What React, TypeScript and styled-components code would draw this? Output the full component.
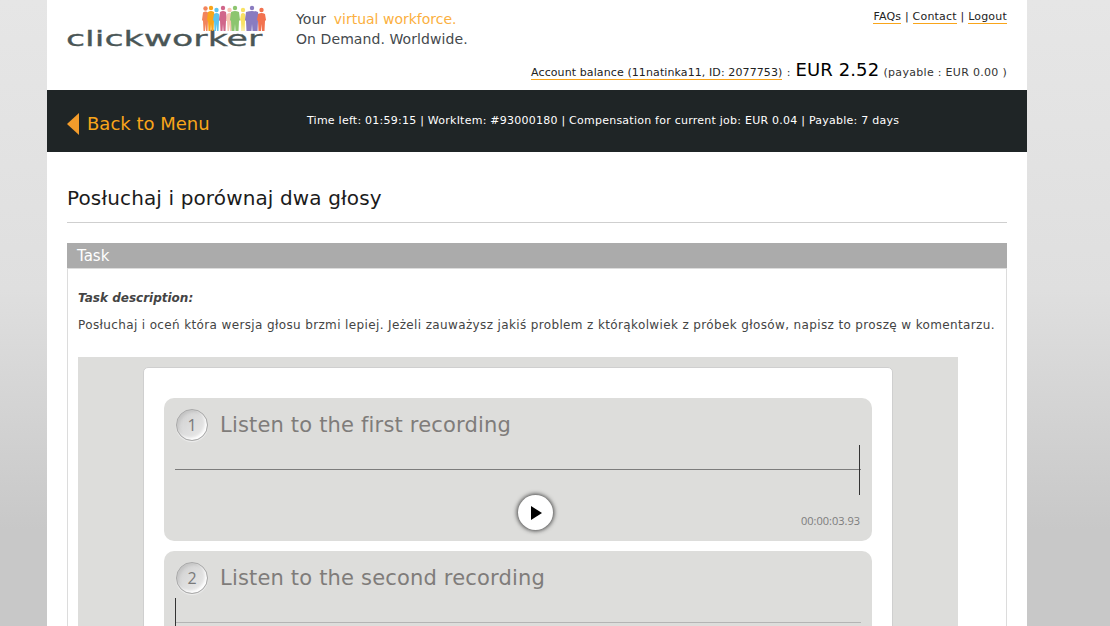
import styled, { createGlobalStyle } from "styled-components";

const GlobalStyle = createGlobalStyle`
  html, body {
    margin: 0;
    height: 100%;
    overflow: hidden;
  }
  body {
    background: linear-gradient(to bottom, #e6e6e6 0, #dfdfdf 290px, #c8c8c8 530px, #c8c8c8 626px);
    font-family: "DejaVu Sans", Verdana, sans-serif;
  }
`;

const Page = styled.div`
  width: 980px;
  height: 626px;
  margin-left: 47px;
  background: #fff;
  overflow: hidden;
`;

const Header = styled.header`
  height: 90px;
  box-sizing: border-box;
  padding: 0 20px;
  display: flex;
  position: relative;
`;

const Logo = styled.div`
  position: relative;
  width: 229px;
  height: 90px;
  flex: none;
`;

const LogoWord = styled.span`
  position: absolute;
  left: -1px;
  top: 21px;
  font-family: "DejaVu Sans", sans-serif;
  font-size: 22px;
  line-height: 36px;
  color: #4a5656;
  -webkit-text-stroke: 0.3px #4a5656;
  transform: scaleX(1.58);
  transform-origin: left;
`;

const LogoPeople = styled.svg`
  position: absolute;
  left: 135px;
  top: 5px;
`;

const Slogan = styled.div`
  padding-top: 9px;
  font-size: 14px;
  line-height: 20px;
  letter-spacing: 0.08px;
  color: #44494d;
`;

const Accent = styled.span`
  margin-left: 3px;
  letter-spacing: 0px;
  color: #fbb040;
`;

const TopLinks = styled.div`
  position: absolute;
  right: 20px;
  top: 10px;
  font-size: 11px;
  line-height: 13px;
  letter-spacing: 0.2px;
  color: #222;
`;

const HeaderLink = styled.a`
  color: #222;
  border-bottom: 1px solid #f9a51a;
`;

const Balance = styled.div`
  position: absolute;
  right: 20px;
  top: 60px;
  font-size: 11px;
  line-height: 20px;
  letter-spacing: 0.8px;
  color: #333;
  white-space: nowrap;
`;

const BalanceLink = styled(HeaderLink)`
  letter-spacing: 0.1px;
`;

const BalanceValue = styled.span`
  font-size: 18px;
  letter-spacing: 0.1px;
  color: #000;
`;

const Payable = styled.span`
  letter-spacing: 0.3px;
`;

const NavBar = styled.nav`
  height: 62px;
  background: #1f2526;
  display: flex;
  align-items: center;
  padding-left: 20px;
`;

const BackLink = styled.a`
  width: 240px;
  flex: none;
  display: flex;
  align-items: center;
  gap: 8px;
  margin-top: 4px;
  font-size: 18px;
  color: #f9a51a;
`;

const BackArrow = styled.span`
  width: 0;
  height: 0;
  margin-top: 2px;
  border-style: solid;
  border-width: 11px 12px 11px 0;
  border-color: transparent #f39c2b transparent transparent;
`;

const JobInfo = styled.div`
  font-size: 11px;
  letter-spacing: 0.24px;
  color: #fff;
  margin-top: -2px;
  white-space: nowrap;
`;

const Content = styled.main`
  padding: 0 20px;
`;

const Title = styled.h1`
  margin: 0;
  height: 71px;
  box-sizing: border-box;
  padding-top: 35px;
  font-size: 20px;
  font-weight: 400;
  line-height: 23px;
  letter-spacing: 0.13px;
  color: #1b1b1b;
  border-bottom: 1px solid #cfcfcf;
`;

const SectionHead = styled.div`
  margin-top: 20px;
  height: 25px;
  box-sizing: border-box;
  padding-left: 10px;
  background: #ababab;
  color: #fff;
  font-size: 15px;
  line-height: 26px;
`;

const SectionBody = styled.section`
  border: 1px solid #dcdcdc;
  padding: 0 10px;
  height: 400px;
`;

const DescLabel = styled.div`
  margin-top: 22px;
  font-size: 12px;
  line-height: 15px;
  font-weight: 700;
  font-style: italic;
  color: #444;
`;

const DescText = styled.p`
  margin: 12px 0 0;
  font-size: 12px;
  line-height: 15px;
  letter-spacing: 0.365px;
  color: #444;
  white-space: nowrap;
`;

const Frame = styled.div`
  margin-top: 24px;
  width: 880px;
  height: 400px;
  box-sizing: border-box;
  background: #dddddb;
  padding: 10px 0 0 65px;
`;

const Card = styled.div`
  width: 750px;
  height: 400px;
  box-sizing: border-box;
  background: #fff;
  border: 1px solid #cfcfcf;
  border-radius: 5px;
  padding: 30px 20px 0;
  display: flex;
  flex-direction: column;
  gap: 10px;
`;

const Player = styled.div`
  width: 708px;
  height: 143px;
  flex: none;
  box-sizing: border-box;
  background: #dddddb;
  border-radius: 10px;
  position: relative;
`;

const PlayerHead = styled.div`
  display: flex;
  align-items: center;
  gap: 12px;
  padding: 11px 0 0 12px;
`;

const StepBadge = styled.span`
  width: 32px;
  height: 32px;
  box-sizing: border-box;
  border-radius: 50%;
  border: 1px solid #a9a9a9;
  box-shadow: inset -2px -2px 3px #fff, inset 2px 2px 3px #c4c4c4, 0 1px 1px #eee;
  background: linear-gradient(135deg, #cfcfcf, #ececec);
  display: flex;
  align-items: center;
  justify-content: center;
  font-size: 16px;
  color: #7a7a7a;
  font-family: "Open Sans", sans-serif;
  flex: none;
`;

const PlayerTitle = styled.h2`
  margin: -1px 0 0;
  font-size: 21px;
  font-weight: 400;
  color: #7f7c7a;
  font-family: "DejaVu Sans", sans-serif;
  white-space: nowrap;
  letter-spacing: 0.18px;
`;

const Wave = styled.div<{ $cursor: "start" | "end"; $dark: boolean }>`
  position: absolute;
  left: 11px;
  top: 71px;
  width: 686px;
  height: 1px;
  background: ${(p) => (p.$dark ? "#7c7c7c" : "#b4b4b4")};

  &::after {
    content: "";
    position: absolute;
    top: -24px;
    ${(p) => (p.$cursor === "end" ? "right: 1px;" : "left: 0;")}
    width: 1px;
    height: 50px;
    background: #333;
  }
`;

const PlayButton = styled.button`
  position: absolute;
  left: 354px;
  top: 97px;
  width: 35px;
  height: 35px;
  padding: 0;
  border: 0;
  border-radius: 50%;
  background: #fff;
  box-shadow: 0 0 4px 1px #444;
  display: flex;
  align-items: center;
  justify-content: center;
`;

const Duration = styled.span`
  position: absolute;
  right: 12px;
  top: 116px;
  font-family: "Open Sans", sans-serif;
  font-size: 11px;
  line-height: 14px;
  color: #7c7c7c;
`;

// logo crowd: left edge, width, head top and colour of each figure
const people = [
  { x: 0, w: 7, t: 1.5, c: "#f2845c" },
  { x: 5, w: 8, t: 1, c: "#f9a51a" },
  { x: 11, w: 7, t: 3, c: "#5cc4ef" },
  { x: 17, w: 8, t: 1, c: "#d0668a" },
  { x: 24, w: 7, t: 3, c: "#f7c6b2" },
  { x: 28, w: 10, t: 1, c: "#8cc56f" },
  { x: 38, w: 6, t: 3, c: "#f8e264" },
  { x: 43, w: 14, t: 1, c: "#8a7cc0" },
  { x: 55, w: 9, t: 3, c: "#f2724f" },
];

const figure = (x: number, w: number, t: number) => {
  const m = x + w / 2;
  const body = t + 5;
  const hip = 15;
  const foot = 26;
  return [
    `M${x + 1} ${body + 1}Q${m} ${body - 1} ${x + w - 1} ${body + 1}`,
    `L${x + w} ${hip}L${x + w - 1} ${hip + 1}L${x + w - 1.5} ${foot}`,
    `H${m + 0.5}L${m} ${hip + 4}L${m - 0.5} ${foot}H${x + 1.5}`,
    `L${x + 1} ${hip + 1}L${x} ${hip}Z`,
  ].join("");
};

const App = () => {
  return (
    <>
      <GlobalStyle />
      <Page>
        <Header>
          <Logo>
            <LogoWord>clickworker</LogoWord>
            <LogoPeople width="66" height="27" viewBox="0 0 66 27">
              {people.map((p) => (
                <g key={p.x} fill={p.c}>
                  <circle cx={p.x + p.w / 2} cy={p.t + 2} r={2.2} />
                  <path d={figure(p.x, p.w, p.t)} />
                </g>
              ))}
            </LogoPeople>
          </Logo>
          <Slogan>
            Your <Accent>virtual workforce.</Accent>
            <br />
            On Demand. Worldwide.
          </Slogan>
          <TopLinks>
            <HeaderLink>FAQs</HeaderLink> | <HeaderLink>Contact</HeaderLink> | <HeaderLink>Logout</HeaderLink>
          </TopLinks>
          <Balance>
            <BalanceLink>Account balance (11natinka11, ID: 2077753)</BalanceLink> : <BalanceValue>EUR 2.52</BalanceValue> <Payable>(payable : EUR 0.00 )</Payable>
          </Balance>
        </Header>
        <NavBar>
          <BackLink>
            <BackArrow />
            Back to Menu
          </BackLink>
          <JobInfo>
            Time left: 01:59:15 | WorkItem: #93000180 | Compensation for current job: EUR 0.04 | Payable: 7 days
          </JobInfo>
        </NavBar>
        <Content>
          <Title>Posłuchaj i porównaj dwa głosy</Title>
          <SectionHead>Task</SectionHead>
          <SectionBody>
            <DescLabel>Task description:</DescLabel>
            <DescText>
              Posłuchaj i oceń która wersja głosu brzmi lepiej. Jeżeli zauważysz jakiś problem z którąkolwiek z próbek głosów, napisz to proszę w komentarzu.
            </DescText>
            <Frame>
              <Card>
                <Player>
                  <PlayerHead>
                    <StepBadge>1</StepBadge>
                    <PlayerTitle>Listen to the first recording</PlayerTitle>
                  </PlayerHead>
                  <Wave $cursor="end" $dark />
                  <PlayButton>
                    <svg width="12" height="14" viewBox="0 0 12 14">
                      <path d="M1 0L12 7L1 14z" fill="#000" />
                    </svg>
                  </PlayButton>
                  <Duration>00:00:03.93</Duration>
                </Player>
                <Player>
                  <PlayerHead>
                    <StepBadge>2</StepBadge>
                    <PlayerTitle>Listen to the second recording</PlayerTitle>
                  </PlayerHead>
                  <Wave $cursor="start" $dark={false} />
                </Player>
              </Card>
            </Frame>
          </SectionBody>
        </Content>
      </Page>
    </>
  );
};

export default App;
